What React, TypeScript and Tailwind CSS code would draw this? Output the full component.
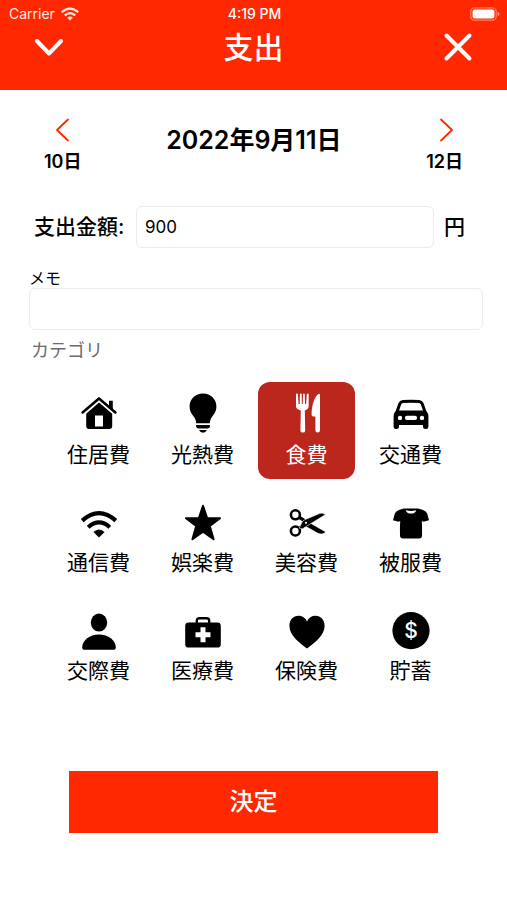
import React from "react";
import clsx from "clsx";

const HouseIcon = () => (
  <>
    <path d="M30 6.8h3.8v9L30 12z" fill="currentColor" />
    <path d="M3.6 18.4 20 4.4l16.4 14" fill="none" stroke="currentColor" strokeWidth="2.6" strokeLinecap="round" strokeLinejoin="round" />
    <path d="M20 8.6 33.2 19.8V32.6a2.4 2.4 0 0 1-2.4 2.4H9.6a2.4 2.4 0 0 1-2.4-2.4V19.8zM16 21.4v11.2h8V21.4z" fill="currentColor" fillRule="evenodd" />
  </>
);

const BulbIcon = () => (
  <g fill="currentColor">
    <path d="M20-.6C12.200-.6 6.600 5 6.600 12.400c0 5.200 2.600 7.800 4.600 10.800 1.200 1.800 1.800 3.600 2 6h13.600c.2-2.400.8-4.200 2-6 2-3 4.600-5.600 4.600-10.800C33.400 5 27.800-.6 20-.6z" />
    <path d="M13.200 31h13.600v1.600q0 1.800-2 1.800h-9.600q-2 0-2-1.800z" />
    <path d="M16 36h8q-1.200 2.700-4 2.700T16 36z" />
  </g>
);

const FoodIcon = () => (
  <g fill="currentColor">
    <path d="M9 .2q0-.8.900-.8t1 .8L11.600 10h1.100L12.900.2q0-.8.900-.8t.9.800L14.900 10h.9L16 .2q0-.8.900-.8t.9.800L18 10h1.100L19.800.2q.1-.8 1-.8t.9.800V12q0 3.400-3.900 4.400l.4 20q0 2.200-2.400 2.200t-2.400-2.200l.4-20Q9 15.400 9 12z" />
    <path d="M31 .2q2-1.400 2 .8v35.200q0 2.400-2.300 2.400t-2.300-2.400V22.600h-2.200q-1.600 0-1.600-1.800C24.600 12 27 3.600 31 .2z" />
  </g>
);

const CarIcon = () => (
  <>
    <path d="M5.800 18.500 8.800 9.800Q9.600 7.800 12 7.600q8-.7 16 0 2.400.2 3.200 2.200l3 8.700" fill="none" stroke="currentColor" strokeWidth="3" />
    <path
      d="M6 16.400h28q3.400 1.600 3.400 5.800v10.600q0 2.200-2.400 2.200h-.6q-2.400 0-2.400-2.200V31H8v1.800Q8 35 5.600 35H5q-2.400 0-2.400-2.200V22.200q0-4.200 3.400-5.800zM9 21.700a2.200 2.200 0 1 0 0 4.400 2.200 2.200 0 1 0 0-4.400zm22 0a2.200 2.200 0 1 0 0 4.400 2.200 2.200 0 1 0 0-4.400zM16 21.800a2 2 0 1 0 0 4.200h8a2 2 0 1 0 0-4.200z"
      fill="currentColor"
      fillRule="evenodd"
    />
  </>
);

const WifiIcon = () => (
  <>
    <path d="M3.200 18.600q16.800-15 33.600 0M9.200 25.200q10.800-9.600 21.600 0" fill="none" stroke="currentColor" strokeWidth="4.200" />
    <path d="M20 35.400 14.400 30q5.600-5 11.200 0z" fill="currentColor" />
  </>
);

const StarIcon = () => (
  <path
    d="M20 3.800 24.200 16.200H37L26.800 24l3.800 13.200L20 29.600 9.400 37.200 13.200 24 3 16.200h12.800z"
    fill="currentColor"
    stroke="currentColor"
    strokeWidth="2"
    strokeLinejoin="round"
  />
);

const ScissorsIcon = () => (
  <>
    <g fill="none" stroke="currentColor" strokeWidth="2.600">
      <circle cx="8.400" cy="12.800" r="4.500" />
      <circle cx="8.400" cy="29" r="4.500" />
      <path d="m12.400 15.400 5 3.200M12.400 26.400l5-4" strokeWidth="3.400" />
    </g>
    <path d="M16.600 17.400 34 27.400l4.400 2.600q-2.800 2.800-7.400 1L15.800 22.600z" fill="currentColor" />
    <path d="M38.600 12.600q-3.600-2.800-7.800-.4L17.600 17.800q-1.800.8-2.800 2.800l-2.600 5.600 3.400.6 4-2.600z" fill="currentColor" stroke="white" strokeWidth=".6" />
    <circle cx="19" cy="20.800" r="1.100" fill="white" />
  </>
);

const ShirtIcon = () => (
  <path
    d="M13 6.400h14l4.400 1.400q3.600 1 4.800 3.600l1.800 6.800-5.600 1.600-1.600-.8q.4 6 .2 14.400 0 3-3 3H12q-3 0-3-3Q8.800 25 9.200 19l-1.600.8L2 18.200l1.800-6.800Q5 8.800 8.600 7.800zM14.800 8.200q.8 3.400 5.200 3.400t5.200-3.400q-5.200 1.600-10.400 0z"
    fill="currentColor"
    fillRule="evenodd"
  />
);

const PersonIcon = () => (
  <g fill="currentColor">
    <ellipse cx="20" cy="12.600" rx="8.200" ry="9" />
    <path d="M20 24.600c9.400 0 16.600 5.800 16.800 12.600q0 2.600-2.600 2.600H5.800q-2.600 0-2.600-2.600C3.400 30.400 10.600 24.600 20 24.600z" />
  </g>
);

const MedicalIcon = () => (
  <>
    <path d="M13.800 13v-2.200q0-2.600 2.600-2.600h7.200q2.600 0 2.600 2.600V13" fill="none" stroke="currentColor" strokeWidth="2.400" />
    <path
      d="M5.600 12.600h28.800q3.400 0 3.400 3.400v18.200q0 3.400-3.400 3.400H5.600q-3.400 0-3.400-3.400V16q0-3.400 3.400-3.400zM17.500 17.300v5h-5v5h5v5h5v-5h5v-5h-5v-5z"
      fill="currentColor"
      fillRule="evenodd"
    />
  </>
);

const HeartIcon = () => (
  <path d="M20 38.600C12 32.600 2.400 25.400 2.400 15.800c0-5.800 3.900-10 9-10 3.800 0 7 2 8.600 5.600 1.600-3.600 4.800-5.600 8.600-5.600 5.100 0 9 4.200 9 10C37.600 25.400 28 32.600 20 38.600z" fill="currentColor" />
);

const DollarIcon = () => (
  <>
    <circle cx="20" cy="20.600" r="18.600" fill="currentColor" />
    <text x="20" y="28" textAnchor="middle" fontSize="21" fontWeight="500" fill="white">$</text>
  </>
);

const categories = [
  { label: "住居費", Icon: HouseIcon },
  { label: "光熱費", Icon: BulbIcon },
  { label: "食費", Icon: FoodIcon },
  { label: "交通費", Icon: CarIcon },
  { label: "通信費", Icon: WifiIcon },
  { label: "娯楽費", Icon: StarIcon },
  { label: "美容費", Icon: ScissorsIcon },
  { label: "被服費", Icon: ShirtIcon },
  { label: "交際費", Icon: PersonIcon },
  { label: "医療費", Icon: MedicalIcon },
  { label: "保険費", Icon: HeartIcon },
  { label: "貯蓄", Icon: DollarIcon },
];

const StatusBar = () => (
  <div className="grid grid-cols-3 items-center pl-[9px] pr-[7px] pt-1 text-sm leading-5">
    <div className="flex items-center gap-1.5 text-white/90">
      <span>Carrier</span>
      <svg viewBox="0 0 18 14" className="h-3.5 w-[18px]">
        <path d="M.8 5.200q8.200-7.200 16.400 0M3.800 8.300q5.200-4.400 10.400 0" fill="none" stroke="currentColor" strokeWidth="2.300" />
        <path d="M9 13.400 6.200 10.700q2.800-2.200 5.600 0z" fill="currentColor" />
      </svg>
    </div>
    <span className="text-center font-medium">4:19 PM</span>
    <svg viewBox="0 0 30 14" className="h-3.5 w-[30px] justify-self-end">
      <rect x=".8" y=".8" width="25.400" height="12.400" rx="3.600" fill="none" stroke="white" strokeOpacity=".4" strokeWidth="1.200" />
      <rect x="2.600" y="2.600" width="21.800" height="8.800" rx="2" fill="white" />
      <path d="M27.600 4.800q2 .8 2 2.200t-2 2.200z" fill="white" fillOpacity=".5" />
    </svg>
  </div>
);

const Header = () => (
  <header className="h-[90px] bg-[#ff2800] text-white">
    <StatusBar />
    <div className="flex items-center justify-between px-[34px]">
      <button type="button" aria-label="閉じる">
        <svg viewBox="0 0 30 30" className="size-[30px]">
          <path d="m3 9 12 12.500L27 9" fill="none" stroke="currentColor" strokeWidth="4" strokeLinecap="round" strokeLinejoin="round" />
        </svg>
      </button>
      <h1 className="text-[30px] leading-[46px] font-medium">支出</h1>
      <button type="button" aria-label="キャンセル">
        <svg viewBox="0 0 30 30" className="size-[30px]">
          <path d="m3.500 3.500 23 23m0-23-23 23" fill="none" stroke="currentColor" strokeWidth="4" strokeLinecap="round" />
        </svg>
      </button>
    </div>
  </header>
);

const DayButton = ({ label, path }: { label: string; path: string }) => (
  <button type="button" className="flex flex-col items-center gap-2 text-lg leading-6 font-semibold">
    <svg viewBox="0 0 24 24" className="size-6">
      <path d={path} fill="none" stroke="#ff2800" strokeWidth="1.800" strokeLinecap="round" strokeLinejoin="round" />
    </svg>
    {label}
  </button>
);

export default function App() {
  const [amount, setAmount] = React.useState("900");
  const [memo, setMemo] = React.useState("");
  const [selected, setSelected] = React.useState("食費");

  return (
    <div className="min-h-screen bg-white font-['Inter','Noto_Sans_CJK_JP',sans-serif] text-black" lang="ja">
      <Header />
      <main className="pb-16">
        <div className="flex items-start justify-between px-11 pt-7">
          <DayButton label="10日" path="M17 1.500 6 12l11 10.500" />
          <h2 className="mt-1.5 text-[25px] leading-8 font-semibold">2022年9月11日</h2>
          <DayButton label="12日" path="M8 1.500 19 12 8 22.500" />
        </div>

        <div className="mt-8 flex items-center pl-[34px] pr-[42px] text-[21px] font-medium">
          <label htmlFor="amount" className="w-[102px] shrink-0 whitespace-nowrap">支出金額:</label>
          <input
            id="amount"
            inputMode="numeric"
            value={amount}
            onChange={(e) => setAmount(e.target.value)}
            className="h-[42px] min-w-0 flex-1 rounded-md border border-gray-200/80 px-2 text-[17px] font-normal"
          />
          <span className="ml-2.5">円</span>
        </div>

        <div className="mt-5 flex flex-col pl-[29px] pr-6">
          <label htmlFor="memo" className="text-base leading-5">メモ</label>
          <input
            id="memo"
            value={memo}
            onChange={(e) => setMemo(e.target.value)}
            className="h-[42px] rounded-md border border-gray-200/80 px-2 text-[17px]"
          />
        </div>

        <p className="mt-[9px] pl-[31px] text-lg leading-6 text-[#6b6b6b]">カテゴリ</p>
        <div className="mt-[19px] grid grid-cols-4 gap-x-[7px] gap-y-[11px] pl-[50px] pr-12">
          {categories.map(({ label, Icon }) => (
            <button
              key={label}
              type="button"
              aria-pressed={selected === label}
              onClick={() => setSelected(label)}
              className={clsx(
                "flex h-[97px] flex-col items-center gap-[5px] rounded-xl pt-3 text-[21px] leading-8",
                selected === label && "bg-[#bb271c] text-white"
              )}
            >
              <svg viewBox="0 0 40 40" className="size-10 shrink-0 overflow-visible">
                <Icon />
              </svg>
              {label}
            </button>
          ))}
        </div>

        <div className="mt-[76px] px-[69px]">
          <button type="button" className="h-[62px] w-full bg-[#ff2800] text-2xl font-medium text-white">決定</button>
        </div>
      </main>
    </div>
  );
}
